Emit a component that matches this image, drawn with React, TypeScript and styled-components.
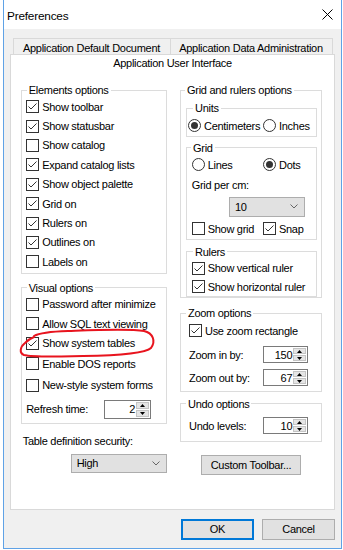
import React from 'react'
import styled, { createGlobalStyle } from 'styled-components'

const GlobalStyle = createGlobalStyle`
  * {
    box-sizing: border-box;
  }
  html, body {
    margin: 0;
    padding: 0;
    background: #ffffff;
  }
  body {
    font-family: "Liberation Sans", Arial, sans-serif;
    font-size: 11px;
    letter-spacing: -0.28px;
    color: #000;
  }
`

const Window = styled.div`
  position: relative;
  width: 339px;
  height: 549px;
  margin-left: 3px;
  border: 1px solid #5fa2e6;
  border-top: none;
  background: #f0f0f0;
  display: flex;
  flex-direction: column;
`

const TitleBar = styled.div`
  flex: none;
  height: 29px;
  background: #fff;
  display: flex;
  align-items: center;
  justify-content: space-between;
  padding: 0 8px 0 3px;
`

const Title = styled.span`
  font-size: 11.8px;
  letter-spacing: -0.2px;
  padding-top: 2px;
`

const ClientArea = styled.div`
  flex: 1;
  display: flex;
  flex-direction: column;
  padding: 9px 6px 0 6px;
`

const TabStrip = styled.div`
  display: flex;
  padding-left: 2.5px;
`

const Tab = styled.div<{ $w: number }>`
  width: ${p => p.$w}px;
  height: 16px;
  border: 1px solid #d9d9d9;
  border-bottom: none;
  padding-top: 2px;
  line-height: 14px;
  text-align: center;
  white-space: nowrap;

  & + & {
    margin-left: -1px;
  }
`

const Panel = styled.div`
  height: 456px;
  border: 1px solid #d9d9d9;
  background: #fff;
  display: flex;
  flex-direction: column;
`

const PanelTitle = styled.div`
  height: 17px;
  line-height: 17px;
  text-align: center;
`

const Columns = styled.div`
  display: grid;
  grid-template-columns: 146px 142.5px;
  column-gap: 13.3px;
  align-items: start;
  padding: 11px 0 0 9.7px;
`

const Column = styled.div`
  display: flex;
  flex-direction: column;
`

const Group = styled.fieldset<{ $mt?: number }>`
  margin: ${p => p.$mt ?? 0}px 0 0;
  padding: 0;
  min-width: 0;
  border: 1px solid #dcdcdc;
`

const Legend = styled.legend<{ $ml: number }>`
  margin-left: ${p => p.$ml}px;
  padding: 0 2px;
  height: 14px;
  line-height: 14px;
`

const GroupBody = styled.div<{ $pl?: number; $pr?: number; $pb?: number }>`
  display: flex;
  flex-direction: column;
  padding: 0 ${p => p.$pr ?? 0}px ${p => p.$pb ?? 0}px ${p => p.$pl ?? 0}px;
`

const Row = styled.div<{ $h: number; $mt?: number }>`
  height: ${p => p.$h}px;
  margin-top: ${p => p.$mt ?? 0}px;
  display: flex;
  align-items: center;
  white-space: nowrap;
`

const SplitRow = styled(Row)<{ $col: number }>`
  display: grid;
  grid-template-columns: ${p => p.$col}px auto;
  align-items: center;
`

const Choice = styled.span`
  display: inline-flex;
  align-items: center;
  gap: 3px;
  white-space: nowrap;
`

const Box = styled.span<{ $round?: boolean }>`
  flex: none;
  width: 13px;
  height: 13px;
  border: 1px solid #333;
  border-radius: ${p => (p.$round ? '50%' : '0')};
  background: #fff;
  display: inline-flex;
  align-items: center;
  justify-content: center;
`

const Dot = styled.span`
  width: 7px;
  height: 7px;
  border-radius: 50%;
  background: #333;
`

const Label = styled.div<{ $mt?: number; $pl?: number }>`
  margin-top: ${p => p.$mt ?? 0}px;
  padding-left: ${p => p.$pl ?? 0}px;
  height: 14px;
  line-height: 14px;
  white-space: nowrap;
`

const Select = styled.div<{ $w: number; $h: number; $mt?: number; $ml?: number }>`
  width: ${p => p.$w}px;
  height: ${p => p.$h}px;
  margin-top: ${p => p.$mt ?? 0}px;
  margin-left: ${p => p.$ml ?? 0}px;
  border: 1px solid #adadad;
  background: #e1e1e1;
  display: flex;
  align-items: center;
  justify-content: space-between;
  padding: 0 6px 0 5px;
`

const Spin = styled.div<{ $w: number; $h: number }>`
  width: ${p => p.$w}px;
  height: ${p => p.$h}px;
  border: 1px solid #7a7a7a;
  background: #fff;
  display: flex;
  padding: 1px;
`

const SpinValue = styled.span`
  flex: 1;
  text-align: right;
  padding-right: 1px;
  align-self: center;
`

const SpinButtons = styled.div`
  width: 13px;
  display: flex;
  flex-direction: column;
  gap: 1px;
`

const SpinButton = styled.span`
  flex: 1;
  background: #e5e5e5;
  border: 1px solid #c4c4c4;
  display: flex;
  align-items: center;
  justify-content: center;
`

const Button = styled.button<{ $w: number; $h: number; $primary?: boolean; $mt?: number; $ml?: number }>`
  width: ${p => p.$w}px;
  height: ${p => p.$h}px;
  margin: ${p => p.$mt ?? 0}px 0 0 ${p => p.$ml ?? 0}px;
  padding: 0;
  font: inherit;
  letter-spacing: inherit;
  color: #000;
  background: #e1e1e1;
  border: ${p => (p.$primary ? '2px solid #0078d7' : '1px solid #adadad')};
`

const Footer = styled.div`
  display: flex;
  justify-content: flex-end;
  gap: 8px;
  margin-top: 8.5px;
`

const Annotation = styled.svg`
  position: absolute;
  left: 12px;
  top: 326px;
  overflow: visible;
  pointer-events: none;
`

const Check = ({ on }: { on: boolean }) => (
  <Box>
    {on && (
      <svg width="11" height="11" viewBox="0 0 11 11">
        <polyline points="1.5,5.5 4,8 9.5,2.5" fill="none" stroke="#333" strokeWidth="1" />
      </svg>
    )}
  </Box>
)

const CheckItem = ({ on, text }: { on: boolean; text: string }) => (
  <Choice>
    <Check on={on} />
    {text}
  </Choice>
)

const RadioItem = ({ on, text }: { on: boolean; text: string }) => (
  <Choice>
    <Box $round>{on && <Dot />}</Box>
    {text}
  </Choice>
)

const Chevron = () => (
  <svg width="8" height="5" viewBox="0 0 8 5">
    <polyline points="0.5,0.5 4,4 7.5,0.5" fill="none" stroke="#666" strokeWidth="1" />
  </svg>
)

const SpinBox = ({ value, w, h }: { value: string; w: number; h: number }) => (
  <Spin $w={w} $h={h}>
    <SpinValue>{value}</SpinValue>
    <SpinButtons>
      <SpinButton>
        <svg width="5" height="3" viewBox="0 0 5 3"><polygon points="2.5,0 5,3 0,3" fill="#000" /></svg>
      </SpinButton>
      <SpinButton>
        <svg width="5" height="3" viewBox="0 0 5 3"><polygon points="0,0 5,0 2.5,3" fill="#000" /></svg>
      </SpinButton>
    </SpinButtons>
  </Spin>
)

const elements: [string, boolean][] = [
  ['Show toolbar', true],
  ['Show statusbar', true],
  ['Show catalog', false],
  ['Expand catalog lists', true],
  ['Show object palette', true],
  ['Grid on', true],
  ['Rulers on', true],
  ['Outlines on', true],
  ['Labels on', false],
]

const visual: [string, boolean, number][] = [
  ['Password after minimize', false, 19],
  ['Allow SQL text viewing', false, 20],
  ['Show system tables', true, 19],
  ['Enable DOS reports', false, 22],
  ['New-style system forms', false, 21],
]

export default function App() {
  return (
    <>
      <GlobalStyle />
      <Window>
        <TitleBar>
          <Title>Preferences</Title>
          <svg width="11" height="11" viewBox="0 0 11 11">
            <path d="M0.5 0.5 L10.5 10.5 M10.5 0.5 L0.5 10.5" stroke="#000" strokeWidth="1" />
          </svg>
        </TitleBar>

        <ClientArea>
          <TabStrip>
            <Tab $w={158}>Application Default Document</Tab>
            <Tab $w={163}>Application Data Administration</Tab>
          </TabStrip>

          <Panel>
            <PanelTitle>Application User Interface</PanelTitle>
            <Columns>
              <Column>
                <Group>
                  <Legend $ml={5}>Elements options</Legend>
                  <GroupBody $pl={4.5} $pb={1}>
                    {elements.map(([text, on]) => (
                      <Row key={text} $h={19.4}>
                        <CheckItem on={on} text={text} />
                      </Row>
                    ))}
                  </GroupBody>
                </Group>

                <Group $mt={7}>
                  <Legend $ml={5}>Visual options</Legend>
                  <GroupBody $pl={4.5}>
                    {visual.map(([text, on, h]) => (
                      <Row key={text} $h={h}>
                        <CheckItem on={on} text={text} />
                      </Row>
                    ))}
                    <SplitRow $h={27} $col={78}>
                      <span>Refresh time:</span>
                      <SpinBox value="2" w={47} h={19} />
                    </SplitRow>
                  </GroupBody>
                </Group>

                <Label $mt={10} $pl={2}>Table definition security:</Label>
                <Select $w={96} $h={19} $mt={6} $ml={50}>
                  <span>High</span>
                  <Chevron />
                </Select>
              </Column>

              <Column>
                <Group>
                  <Legend $ml={4}>Grid and rulers options</Legend>
                  <GroupBody $pl={5} $pr={4}>
                    <Group $mt={4.3}>
                      <Legend $ml={6}>Units</Legend>
                      <GroupBody $pl={1}>
                        <SplitRow $h={20.5} $col={75}>
                          <RadioItem on text="Centimeters" />
                          <RadioItem on={false} text="Inches" />
                        </SplitRow>
                      </GroupBody>
                    </Group>

                    <Group $mt={4}>
                      <Legend $ml={4}>Grid</Legend>
                      <GroupBody $pl={4.7}>
                        <SplitRow $h={20} $col={71.3}>
                          <RadioItem on={false} text="Lines" />
                          <RadioItem on text="Dots" />
                        </SplitRow>
                        <Row $h={20}>Grid per cm:</Row>
                        <Select $w={76} $h={20} $mt={2} $ml={37.3}>
                          <span>10</span>
                          <Chevron />
                        </Select>
                        <SplitRow $h={20} $mt={2} $col={71.3}>
                          <CheckItem on={false} text="Show grid" />
                          <CheckItem on text="Snap" />
                        </SplitRow>
                      </GroupBody>
                    </Group>

                    <Group $mt={5}>
                      <Legend $ml={6}>Rulers</Legend>
                      <GroupBody $pl={4.7}>
                        <Row $h={18.5}>
                          <CheckItem on text="Show vertical ruler" />
                        </Row>
                        <Row $h={18.5}>
                          <CheckItem on text="Show horizontal ruler" />
                        </Row>
                      </GroupBody>
                    </Group>
                  </GroupBody>
                </Group>

                <Group $mt={8.5}>
                  <Legend $ml={5}>Zoom options</Legend>
                  <GroupBody $pl={8} $pb={1.4}>
                    <Row $h={21}>
                      <CheckItem on text="Use zoom rectangle" />
                    </Row>
                    <SplitRow $h={23} $mt={2} $col={74.3}>
                      <span>Zoom in by:</span>
                      <SpinBox value="150" w={45} h={17} />
                    </SplitRow>
                    <SplitRow $h={23} $col={74.3}>
                      <span>Zoom out by:</span>
                      <SpinBox value="67" w={45} h={17} />
                    </SplitRow>
                  </GroupBody>
                </Group>

                <Group $mt={5}>
                  <Legend $ml={5}>Undo options</Legend>
                  <GroupBody $pl={8}>
                    <SplitRow $h={30} $col={74.3}>
                      <span>Undo levels:</span>
                      <SpinBox value="10" w={45} h={17} />
                    </SplitRow>
                  </GroupBody>
                </Group>

                <Button $w={100} $h={20} $mt={13.3} $ml={21}>Custom Toolbar...</Button>
              </Column>
            </Columns>
          </Panel>

          <Footer>
            <Button $w={73} $h={21} $primary>OK</Button>
            <Button $w={73} $h={21}>Cancel</Button>
          </Footer>
        </ClientArea>

        <Annotation width="145" height="36" viewBox="0 0 145 36">
          <path
            d="M18 10 C24 6.5, 36 5.5, 52 5 C80 4, 113 2.5, 128 5 C137 7, 140 15, 135 22 C129 28, 100 29.5, 67 30 C42 30.5, 18 31.5, 8 29 C3 27, 4 21, 9 17 C11 15, 13 13, 18 11"
            fill="none"
            stroke="#e8141e"
            strokeWidth="2"
            strokeLinecap="round"
          />
        </Annotation>
      </Window>
    </>
  )
}
